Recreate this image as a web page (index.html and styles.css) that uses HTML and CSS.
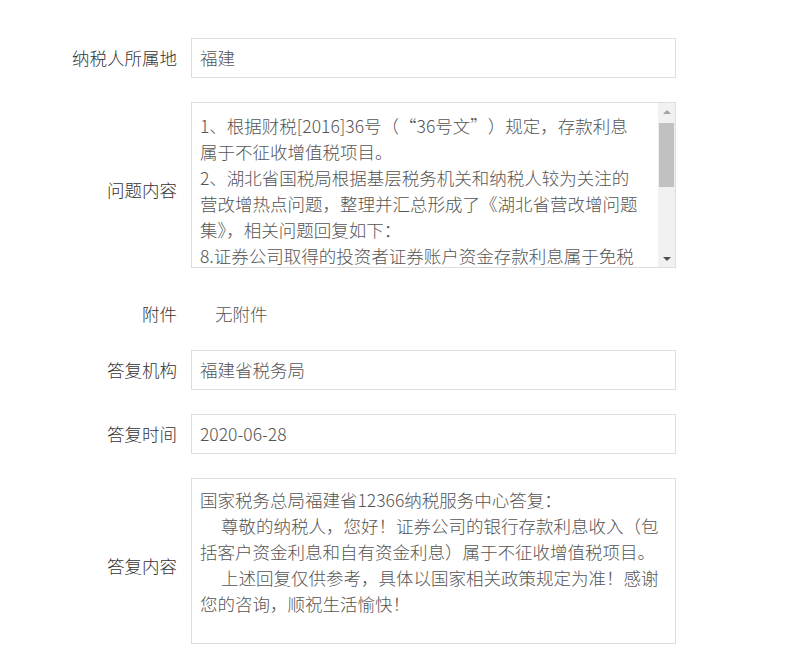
FILE: index.html
```html
<!DOCTYPE html>
<html lang="zh-CN">
<head>
<meta charset="utf-8">
<title>答复详情</title>
<link rel="stylesheet" href="styles.css">
</head>
<body>
<div class="form">
  <div class="row">
    <div class="label">纳税人所属地</div>
    <div class="field">福建</div>
  </div>
  <div class="row">
    <div class="label label-low">问题内容</div>
    <div class="field area">
      <div class="area-text">1、根据财税[2016]36号（<span class="q-open">“</span>36号文<span class="q-close">”</span>）规定，存款利息<br>属于不征收增值税项目。<br>2、湖北省国税局根据基层税务机关和纳税人较为关注的<br>营改增热点问题，整理并汇总形成了《湖北省营改增问题<br>集》，相关问题回复如下：<br>8.证券公司取得的投资者证券账户资金存款利息属于免税</div>
      <div class="scrollbar">
        <div class="sb-btn"><span class="arrow-up"></span></div>
        <div class="sb-track"><div class="sb-thumb"></div></div>
        <div class="sb-btn"><span class="arrow-down"></span></div>
      </div>
    </div>
  </div>
  <div class="row row-plain">
    <div class="label">附件</div>
    <div class="plain">无附件</div>
  </div>
  <div class="row">
    <div class="label">答复机构</div>
    <div class="field">福建省税务局</div>
  </div>
  <div class="row">
    <div class="label">答复时间</div>
    <div class="field">2020-06-28</div>
  </div>
  <div class="row">
    <div class="label label-low">答复内容</div>
    <div class="field answer">
      <div>国家税务总局福建省12366纳税服务中心答复：</div>
      <div class="para">尊敬的纳税人，您好！证券公司的银行存款利息收入（包<br>括客户资金利息和自有资金利息）属于不征收增值税项目。</div>
      <div class="para">上述回复仅供参考，具体以国家相关政策规定为准！感谢<br>您的咨询，顺祝生活愉快！</div>
    </div>
  </div>
</div>
</body>
</html>
```

FILE: styles.css
```css
html, body {
  margin: 0;
  padding: 0;
  background: #ffffff;
}

body {
  font-family: "Noto Sans CJK SC", "Noto Sans", sans-serif;
  font-size: 17.5px;
  font-weight: 300;
  line-height: 26px;
  color: #333333;
}

.form {
  padding-top: 38px;
  display: flex;
  flex-direction: column;
  gap: 24px;
}

.row {
  display: flex;
  align-items: center;
}

.label {
  width: 177px;
  margin-right: 14px;
  text-align: right;
  color: #333333;
  flex-shrink: 0;
}

.label-low {
  padding-top: 9px;
}

.field {
  width: 485px;
  box-sizing: border-box;
  border: 1px solid #dddddd;
  padding: 6px 8px;
  color: #555555;
  white-space: nowrap;
}

.area {
  height: 166px;
  padding: 0;
  display: flex;
}

.area-text {
  flex: 1;
  padding: 10px 8px 0;
  overflow: hidden;
}

.q-open,
.q-close {
  display: inline-block;
  width: 1em;
  text-indent: 0;
}

.q-open {
  text-align: right;
}

.q-close {
  text-align: left;
}

.scrollbar {
  width: 17px;
  flex-shrink: 0;
  background: #f1f1f1;
  display: flex;
  flex-direction: column;
}

.sb-btn {
  height: 17px;
  display: flex;
  align-items: center;
  justify-content: center;
}

.sb-track {
  flex: 1;
  padding-top: 3px;
}

.sb-thumb {
  height: 64px;
  margin: 0 1px;
  background: #c1c1c1;
}

.arrow-up {
  width: 0;
  height: 0;
  border-left: 4px solid transparent;
  border-right: 4px solid transparent;
  border-bottom: 4px solid #a3a3a3;
}

.arrow-down {
  width: 0;
  height: 0;
  border-left: 4px solid transparent;
  border-right: 4px solid transparent;
  border-top: 4px solid #505050;
}

.row-plain {
  height: 34px;
  align-items: flex-start;
}

.row-plain .label {
  padding-top: 9px;
}

.plain {
  padding-top: 9px;
  padding-left: 24px;
  color: #555555;
}

.answer {
  height: 166px;
  padding: 8px 8px 0;
}

.para {
  text-indent: 21px;
}
```
